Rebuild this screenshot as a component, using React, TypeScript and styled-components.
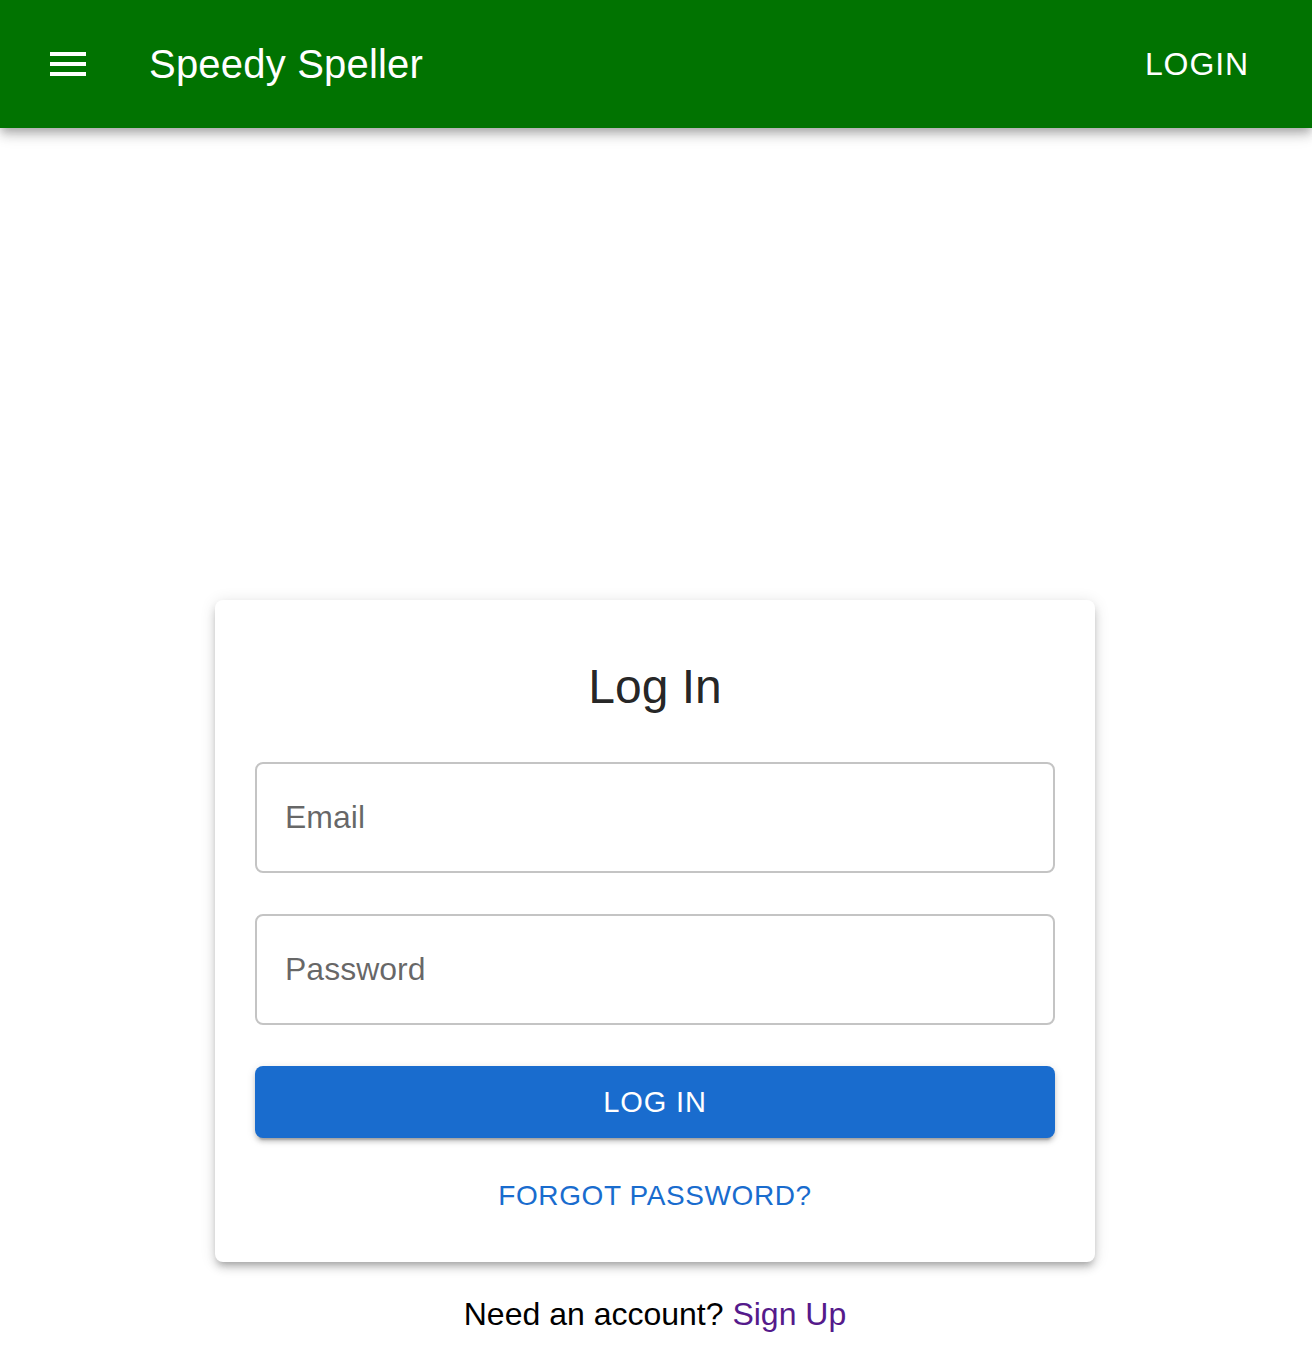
import React from 'react';
import styled, { createGlobalStyle } from 'styled-components';

const GlobalStyle = createGlobalStyle`
  html, body {
    margin: 0;
    padding: 0;
    background: #ffffff;
    font-family: 'Liberation Sans', Arial, Helvetica, sans-serif;
  }
  * {
    box-sizing: border-box;
  }
`;

const AppBar = styled.header`
  height: 128px;
  background: #017301;
  color: #ffffff;
  display: flex;
  align-items: center;
  padding: 0 48px;
  box-shadow: 0 4px 8px -2px rgba(0, 0, 0, 0.2), 0 8px 10px 0 rgba(0, 0, 0, 0.14),
    0 2px 20px 0 rgba(0, 0, 0, 0.12);
  position: relative;
  z-index: 2;
`;

const MenuButton = styled.button`
  border: none;
  background: transparent;
  padding: 16px;
  margin-left: -20px;
  display: flex;
  cursor: pointer;
  color: inherit;
`;

const Title = styled.h1`
  flex: 1;
  margin: 0 0 0 41px;
  font-size: 40px;
  font-weight: 400;
  line-height: 1.15;
  letter-spacing: 0.2px;
`;

const BarButton = styled.button`
  border: none;
  background: transparent;
  color: #ffffff;
  font-family: inherit;
  font-size: 32px;
  letter-spacing: 0.9px;
  text-transform: uppercase;
  padding: 12px 16px;
  margin-right: -1px;
  cursor: pointer;
`;

const Main = styled.main`
  display: flex;
  flex-direction: column;
  align-items: center;
  padding: 472px 2px 0 0;
`;

const Card = styled.section`
  width: 880px;
  background: #ffffff;
  border-radius: 8px;
  padding: 55px 40px 30px;
  display: flex;
  flex-direction: column;
  align-items: stretch;
  box-shadow: 0 6px 6px -4px rgba(0, 0, 0, 0.2), 0 6px 8px 0 rgba(0, 0, 0, 0.14),
    0 2px 16px 0 rgba(0, 0, 0, 0.12);
`;

const Heading = styled.h2`
  margin: 0 0 43px;
  text-align: center;
  font-size: 48px;
  font-weight: 400;
  line-height: 64px;
  color: rgba(0, 0, 0, 0.87);
`;

const Field = styled.input`
  display: block;
  width: 100%;
  height: 111px;
  border: 2px solid #c4c4c4;
  border-radius: 8px;
  padding: 0 28px;
  font-family: inherit;
  font-size: 32px;
  color: rgba(0, 0, 0, 0.87);
  background: #ffffff;
  outline: none;
  margin-bottom: 41px;

  &::placeholder {
    color: rgba(0, 0, 0, 0.6);
    opacity: 1;
  }
`;

const PrimaryButton = styled.button`
  height: 72px;
  width: 100%;
  border: none;
  border-radius: 8px;
  background: #196cce;
  color: #ffffff;
  font-family: inherit;
  font-size: 29px;
  letter-spacing: 0.9px;
  text-transform: uppercase;
  cursor: pointer;
  box-shadow: 0 6px 2px -4px rgba(0, 0, 0, 0.2), 0 4px 4px 0 rgba(0, 0, 0, 0.14),
    0 2px 10px 0 rgba(0, 0, 0, 0.12);
`;

const TextButton = styled.button`
  align-self: center;
  margin-top: 21px;
  border: none;
  background: transparent;
  color: #196cce;
  font-family: inherit;
  font-size: 28px;
  line-height: 1.75;
  letter-spacing: 0.6px;
  text-transform: uppercase;
  padding: 12px 16px;
  cursor: pointer;
`;

const Footer = styled.p`
  margin: 28px 0 0;
  font-size: 32px;
  line-height: 48px;
  color: #000000;
  text-align: center;
`;

const SignUpLink = styled.a`
  color: #551a8b;
  text-decoration: none;
`;

function MenuIcon() {
  return (
    <svg width='48' height='48' viewBox='0 0 24 24' fill='currentColor'>
      <path d='M3 18h18v-2H3v2zm0-5h18v-2H3v2zm0-7v2h18V6H3z' />
    </svg>
  );
}

export default function App() {
  return (
    <>
      <GlobalStyle />
      <AppBar>
        <MenuButton aria-label='menu'>
          <MenuIcon />
        </MenuButton>
        <Title>Speedy Speller</Title>
        <BarButton>Login</BarButton>
      </AppBar>
      <Main>
        <Card>
          <Heading>Log In</Heading>
          <Field type='email' placeholder='Email' />
          <Field type='password' placeholder='Password' />
          <PrimaryButton>Log In</PrimaryButton>
          <TextButton>Forgot Password?</TextButton>
        </Card>
        <Footer>
          Need an account? <SignUpLink href='#'>Sign Up</SignUpLink>
        </Footer>
      </Main>
    </>
  );
}
